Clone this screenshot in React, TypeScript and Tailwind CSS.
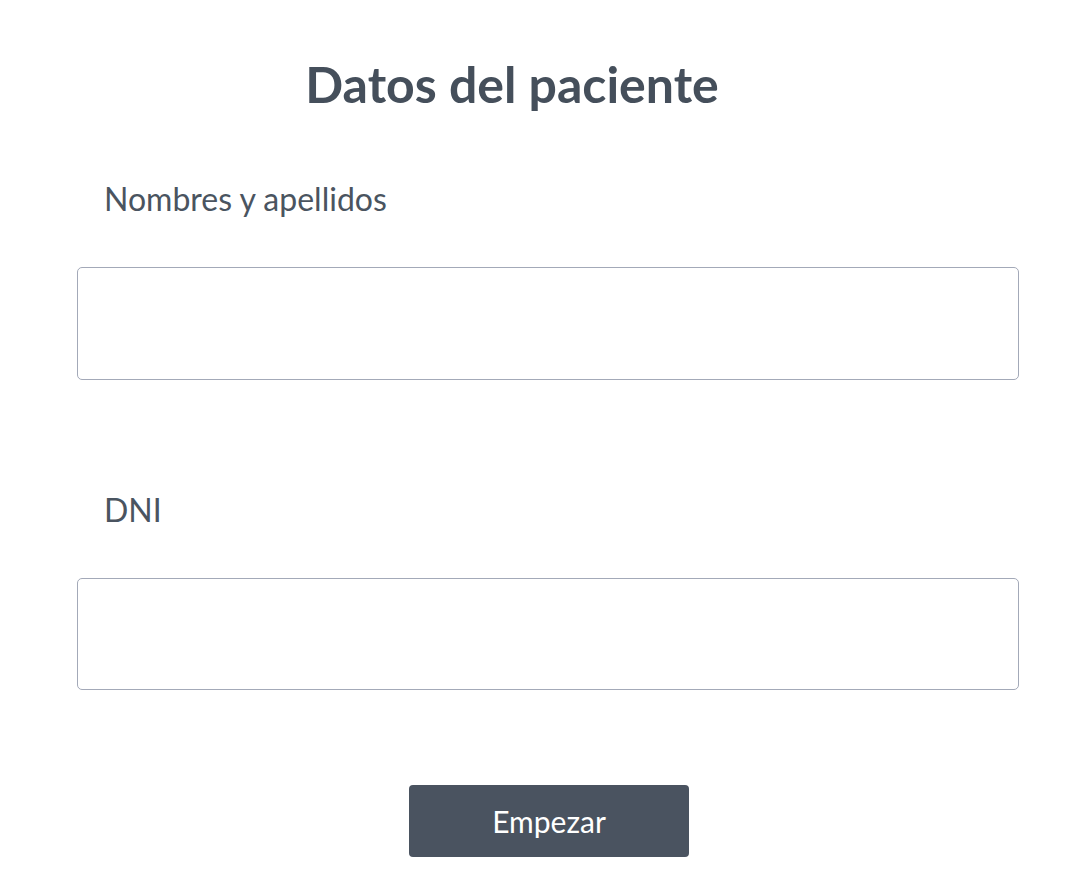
import React from "react";

export default function App() {
  return (
    <div className="w-[1068px] h-[884px] bg-white" style={{ fontFamily: "Lato, 'Noto Sans', sans-serif" }}>
      <div className="pl-[77px] w-[1019px] pt-[54px]">
        <h1 className="text-[50px] leading-[60px] font-bold text-[#454f5b] text-center pr-[72px]">Datos del paciente</h1>
        <div className="mt-[65px] pl-[27px] text-[32px] leading-[40px] text-[#4a5460]">Nombres y apellidos</div>
        <div className="mt-[48px] h-[113px] border border-[#a3a9b8] rounded-[5px]"></div>
        <div className="mt-[110px] pl-[27px] text-[32px] leading-[40px] text-[#4a5460]">DNI</div>
        <div className="mt-[48px] h-[112px] border border-[#a3a9b8] rounded-[5px]"></div>
        <div className="mt-[95px] flex justify-center pl-[2px]">
          <button className="w-[280px] h-[72px] bg-[#4a5360] rounded-[4px] text-white text-[30px]">Empezar</button>
        </div>
      </div>
    </div>
  );
}
